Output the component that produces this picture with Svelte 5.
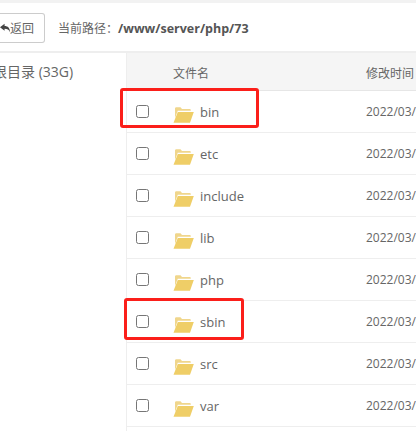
<script>
  const files = ['bin', 'etc', 'include', 'lib', 'php', 'sbin', 'src', 'var'];
</script>

<div class="page">
  <div class="toolbar">
    <button class="back">
      <svg class="arrow" viewBox="0 0 12 10" width="10" height="10"><path d="M0 4 5.500 0V2.600C9.500 2.600 12 5 12 10 10.800 7.300 8.800 6 5.500 6V8.400Z" fill="#444" /></svg>返回
    </button>
    <div class="path"><span class="label">当前路径：</span><b>/www/server/php/73</b></div>
  </div>
  <div class="body">
    <aside class="side">根目录 (33G)</aside>
    <section class="table">
      <div class="row head">
        <span class="check"></span>
        <span class="name">文件名</span>
        <span class="time">修改时间</span>
      </div>
      {#each files as f}
        <div class="row">
          <span class="check"><i class="box"></i></span>
          <span class="name file">
            <svg class="folder" viewBox="0 0 21 16" width="21" height="16">
              <path d="M2 15V1.800C2 0.800 2.500 0.300 3.300 0.300H7.500L9 2H16.500C17.300 2 17.800 2.500 17.800 3.200V3.800H4.800L2 11Z" fill="#f0d68c" />
              <path d="M0.500 15.800 4.800 5H20.800L17 15.800Z" fill="#efce67" />
            </svg>{f}
          </span>
          <span class="time">2022/03/01 10:12:30</span>
        </div>
      {/each}
    </section>
  </div>
  <div class="mark one"></div>
  <div class="mark two"></div>
</div>

<style>
  :global(body) { margin: 0; background: #fff; overflow: hidden; }
  .page {
    position: relative;
    width: 416px;
    height: 431px;
    overflow: hidden;
    font-family: "Open Sans", "Noto Sans CJK SC", sans-serif;
    font-size: 12px;
    color: #666;
    box-sizing: border-box;
    border-top: 3px solid #f2f2f2;
  }
  .toolbar {
    height: 50px;
    box-sizing: border-box;
    border-bottom: 2px solid #eee;
    display: flex;
    align-items: flex-start;
    padding-top: 10px;
  }
  .back {
    width: 45px;
    height: 30px;
    margin-right: 13px;
    box-sizing: border-box;
    border: 1px solid #ccc;
    border-left: 0;
    border-radius: 0 3px 3px 0;
    background: #fff;
    color: #666;
    font: inherit;
    padding: 0;
    display: flex;
    align-items: center;
    white-space: nowrap;
  }
  .arrow { flex: none; }
  .path { line-height: 32px; white-space: nowrap; }
  .path b { color: #555; font-weight: 700; font-size: 12.500px; }
  .body { display: flex; }
  .side {
    width: 127px;
    flex: none;
    box-sizing: border-box;
    border-right: 1px solid #eee;
    padding-top: 9px;
    line-height: 20px;
    font-size: 14px;
    text-indent: -7px;
    overflow: hidden;
    white-space: nowrap;
    height: 378px;
  }
  .table { flex: 1; min-width: 0; }
  .row {
    display: flex;
    align-items: center;
    height: 42px;
    box-sizing: border-box;
    border-bottom: 1px solid #eee;
    white-space: nowrap;
  }
  .head {
    height: 38px;
    background: #f5f5f5;
    border-bottom: 1px solid #e6e6e6;
    padding-top: 2px;
  }
  .check { width: 46px; flex: none; display: flex; padding-left: 9px; box-sizing: border-box; }
  .box {
    display: block;
    width: 13px;
    height: 13px;
    box-sizing: border-box;
    border: 1px solid #767676;
    border-radius: 2.500px;
    background: #fff;
  }
  .name { width: 193px; flex: none; display: flex; align-items: center; }
  .file { font-size: 13px; }
  .folder { flex: none; margin-right: 6px; margin-top: 7px; }
  .time { flex: none; }
  .mark {
    position: absolute;
    box-sizing: border-box;
    border: 3px solid #fb1f1a;
    border-radius: 3px;
  }
  .one { left: 120px; top: 85px; width: 139px; height: 40px; }
  .two { left: 124px; top: 295px; width: 120px; height: 42px; }
</style>
